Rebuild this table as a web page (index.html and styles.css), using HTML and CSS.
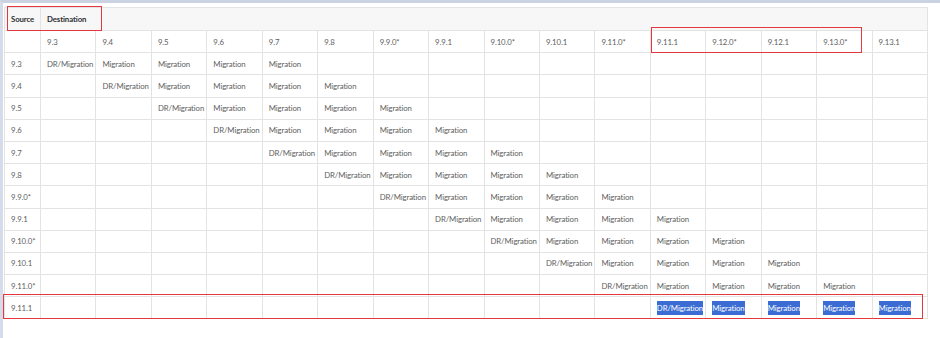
FILE: index.html
```html
<!DOCTYPE html>
<html>
<head>
<meta charset="utf-8">
<link rel="stylesheet" href="styles.css">
</head>
<body>
<div class="page">
<table class="matrix">
<colgroup><col class="c-src"><col span="16"></colgroup>
<thead>
<tr class="head"><th>Source</th><th colspan="16">Destination</th></tr>
<tr class="vers"><td></td><td>9.3</td><td>9.4</td><td>9.5</td><td>9.6</td><td>9.7</td><td>9.8</td><td>9.9.0*</td><td>9.9.1</td><td>9.10.0*</td><td>9.10.1</td><td>9.11.0*</td><td>9.11.1</td><td>9.12.0*</td><td>9.12.1</td><td>9.13.0*</td><td>9.13.1</td></tr>
</thead>
<tbody>
<tr><td>9.3</td><td>DR/Migration</td><td>Migration</td><td>Migration</td><td>Migration</td><td>Migration</td><td></td><td></td><td></td><td></td><td></td><td></td><td></td><td></td><td></td><td></td><td></td></tr>
<tr><td>9.4</td><td></td><td>DR/Migration</td><td>Migration</td><td>Migration</td><td>Migration</td><td>Migration</td><td></td><td></td><td></td><td></td><td></td><td></td><td></td><td></td><td></td><td></td></tr>
<tr><td>9.5</td><td></td><td></td><td>DR/Migration</td><td>Migration</td><td>Migration</td><td>Migration</td><td>Migration</td><td></td><td></td><td></td><td></td><td></td><td></td><td></td><td></td><td></td></tr>
<tr><td>9.6</td><td></td><td></td><td></td><td>DR/Migration</td><td>Migration</td><td>Migration</td><td>Migration</td><td>Migration</td><td></td><td></td><td></td><td></td><td></td><td></td><td></td><td></td></tr>
<tr><td>9.7</td><td></td><td></td><td></td><td></td><td>DR/Migration</td><td>Migration</td><td>Migration</td><td>Migration</td><td>Migration</td><td></td><td></td><td></td><td></td><td></td><td></td><td></td></tr>
<tr><td>9.8</td><td></td><td></td><td></td><td></td><td></td><td>DR/Migration</td><td>Migration</td><td>Migration</td><td>Migration</td><td>Migration</td><td></td><td></td><td></td><td></td><td></td><td></td></tr>
<tr><td>9.9.0*</td><td></td><td></td><td></td><td></td><td></td><td></td><td>DR/Migration</td><td>Migration</td><td>Migration</td><td>Migration</td><td>Migration</td><td></td><td></td><td></td><td></td><td></td></tr>
<tr><td>9.9.1</td><td></td><td></td><td></td><td></td><td></td><td></td><td></td><td>DR/Migration</td><td>Migration</td><td>Migration</td><td>Migration</td><td>Migration</td><td></td><td></td><td></td><td></td></tr>
<tr><td>9.10.0*</td><td></td><td></td><td></td><td></td><td></td><td></td><td></td><td></td><td>DR/Migration</td><td>Migration</td><td>Migration</td><td>Migration</td><td>Migration</td><td></td><td></td><td></td></tr>
<tr><td>9.10.1</td><td></td><td></td><td></td><td></td><td></td><td></td><td></td><td></td><td></td><td>DR/Migration</td><td>Migration</td><td>Migration</td><td>Migration</td><td>Migration</td><td></td><td></td></tr>
<tr><td>9.11.0*</td><td></td><td></td><td></td><td></td><td></td><td></td><td></td><td></td><td></td><td></td><td>DR/Migration</td><td>Migration</td><td>Migration</td><td>Migration</td><td>Migration</td><td></td></tr>
<tr><td>9.11.1</td><td></td><td></td><td></td><td></td><td></td><td></td><td></td><td></td><td></td><td></td><td></td><td><span class="sel">DR/Migration</span></td><td><span class="sel">Migration</span></td><td><span class="sel">Migration</span></td><td><span class="sel">Migration</span></td><td><span class="sel">Migration</span></td></tr>
</tbody>
</table>
<div class="mark mark-head"></div>
<div class="mark mark-cols"></div>
<div class="mark mark-row"></div>
</div>
</body>
</html>
```
FILE: styles.css
```css
html, body {
  margin: 0;
  padding: 0;
  background: #ffffff;
}

.page {
  position: relative;
  box-sizing: border-box;
  min-height: 338px;
  border-top: 3px solid #cbd3e3;
  border-left: 3px solid #d4dbe9;
  padding: 4px 0 0 1px;
  font-family: Lato, "Noto Sans", sans-serif;
}

.matrix {
  border-collapse: collapse;
  table-layout: fixed;
  width: 924px;
  font-size: 7.8px;
  letter-spacing: -0.1px;
  font-variant-ligatures: none;
  color: #5e5e5e;
}

.c-src {
  width: 36px;
}

.matrix th,
.matrix td {
  border: 1px solid #e3e3e3;
  padding: 0 0 0 6px;
  text-align: left;
  white-space: nowrap;
  overflow: hidden;
  font-weight: normal;
}

.matrix tr {
  height: 22.2px;
}

.head th {
  background: #f7f7f7;
  color: #2f2f2f;
  font-weight: bold;
}

.matrix tr.head {
  height: 23px;
}

.sel {
  background: #3a6cd3;
  color: #ffffff;
  padding: 2px 0;
}

.mark {
  position: absolute;
  box-sizing: border-box;
  border: 1.5px solid #e5383c;
}

.mark-head {
  left: 4px;
  top: 3px;
  width: 95px;
  height: 25px;
}

.mark-cols {
  left: 648px;
  top: 24px;
  width: 211px;
  height: 26px;
}

.mark-row {
  left: 0;
  top: 291px;
  width: 920px;
  height: 25px;
}
```
